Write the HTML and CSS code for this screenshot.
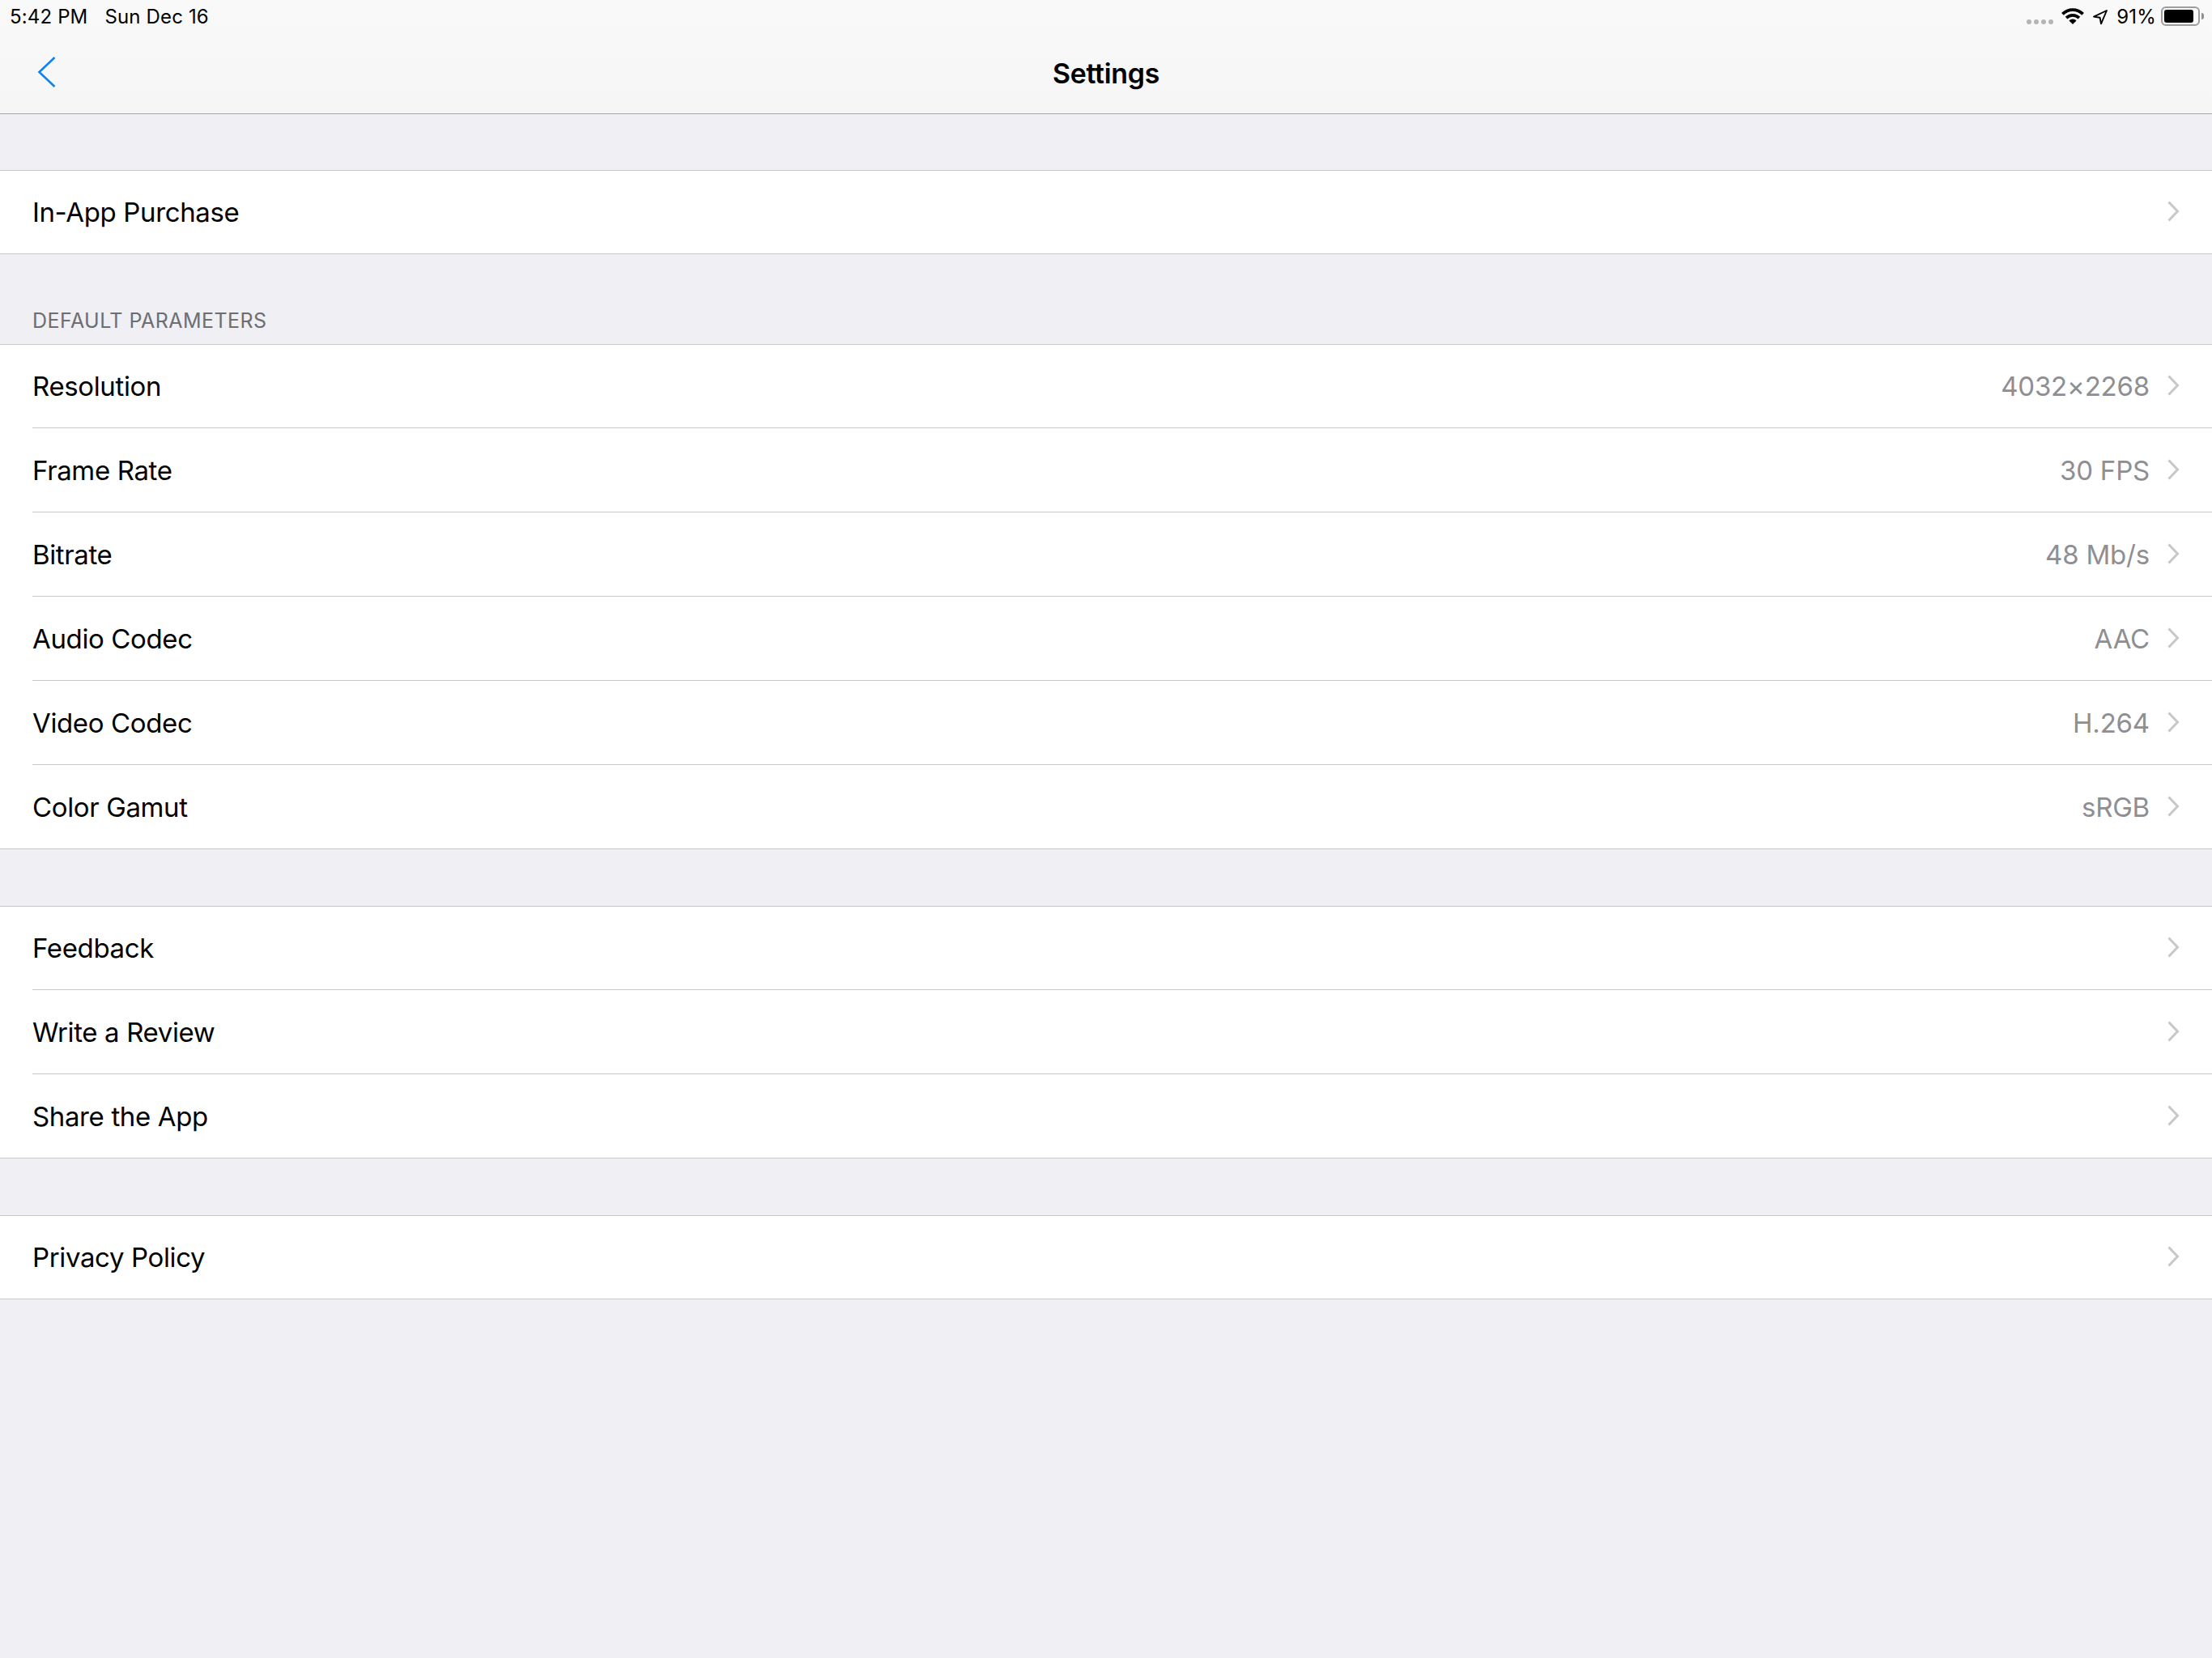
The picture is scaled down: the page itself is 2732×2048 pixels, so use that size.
FILE: index.html
```html
<!DOCTYPE html>
<html lang="en">
<head>
<meta charset="utf-8">
<title>Settings</title>
<link rel="stylesheet" href="styles.css">
</head>
<body>
<header class="top">
  <div class="status">
    <div class="status-left"><span class="time">5:42 PM</span><span class="date">Sun Dec 16</span></div>
    <div class="status-right">
      <div class="dots"><i></i><i></i><i></i><i></i></div>
      <svg class="wifi" width="28" height="20" viewBox="0 0 28 20"><path d="M14 20 9.4 15.4a6.5 6.5 0 0 1 9.2 0Z" fill="#000"/><path d="M6.1 12.1a11.2 11.2 0 0 1 15.8 0" fill="none" stroke="#000" stroke-width="3.8"/><path d="M1.4 7.4a17.8 17.8 0 0 1 25.2 0" fill="none" stroke="#000" stroke-width="3.8"/></svg>
      <svg class="loc" width="20" height="20" viewBox="0 0 20 20"><path d="M18 2 2 9.6l7.6 1.2L11 18.4Z" fill="none" stroke="#000" stroke-width="1.9" stroke-linejoin="round"/></svg>
      <span class="pct">91%</span>
      <div class="battery"><div class="battery-body"><div class="battery-fill"></div></div><div class="battery-cap"></div></div>
    </div>
  </div>
  <nav class="nav">
    <svg class="back" width="24" height="40" viewBox="0 0 24 40"><path d="M21.5 2 2.5 20l19 18" fill="none" stroke="#0a84f0" stroke-width="2.6"/></svg>
    <h1 class="title">Settings</h1>
  </nav>
</header>
<main>
  <section class="group first">
    <div class="row"><span class="label">In-App Purchase</span><svg class="chev" width="18" height="28" viewBox="0 0 18 28"><path d="M4.5 2.5 15.5 14 4.5 25.5" fill="none" stroke="#c7c7cc" stroke-width="3"/></svg></div>
  </section>
  <h2 class="section-title">DEFAULT PARAMETERS</h2>
  <section class="group">
    <div class="row"><span class="label">Resolution</span><span class="value">4032×2268</span><svg class="chev" width="18" height="28" viewBox="0 0 18 28"><path d="M4.5 2.5 15.5 14 4.5 25.5" fill="none" stroke="#c7c7cc" stroke-width="3"/></svg></div>
    <div class="row"><span class="label">Frame Rate</span><span class="value">30 FPS</span><svg class="chev" width="18" height="28" viewBox="0 0 18 28"><path d="M4.5 2.5 15.5 14 4.5 25.5" fill="none" stroke="#c7c7cc" stroke-width="3"/></svg></div>
    <div class="row"><span class="label">Bitrate</span><span class="value">48 Mb/s</span><svg class="chev" width="18" height="28" viewBox="0 0 18 28"><path d="M4.5 2.5 15.5 14 4.5 25.5" fill="none" stroke="#c7c7cc" stroke-width="3"/></svg></div>
    <div class="row"><span class="label">Audio Codec</span><span class="value">AAC</span><svg class="chev" width="18" height="28" viewBox="0 0 18 28"><path d="M4.5 2.5 15.5 14 4.5 25.5" fill="none" stroke="#c7c7cc" stroke-width="3"/></svg></div>
    <div class="row"><span class="label">Video Codec</span><span class="value">H.264</span><svg class="chev" width="18" height="28" viewBox="0 0 18 28"><path d="M4.5 2.5 15.5 14 4.5 25.5" fill="none" stroke="#c7c7cc" stroke-width="3"/></svg></div>
    <div class="row"><span class="label">Color Gamut</span><span class="value">sRGB</span><svg class="chev" width="18" height="28" viewBox="0 0 18 28"><path d="M4.5 2.5 15.5 14 4.5 25.5" fill="none" stroke="#c7c7cc" stroke-width="3"/></svg></div>
  </section>
  <section class="group gap">
    <div class="row"><span class="label">Feedback</span><svg class="chev" width="18" height="28" viewBox="0 0 18 28"><path d="M4.5 2.5 15.5 14 4.5 25.5" fill="none" stroke="#c7c7cc" stroke-width="3"/></svg></div>
    <div class="row"><span class="label">Write a Review</span><svg class="chev" width="18" height="28" viewBox="0 0 18 28"><path d="M4.5 2.5 15.5 14 4.5 25.5" fill="none" stroke="#c7c7cc" stroke-width="3"/></svg></div>
    <div class="row"><span class="label">Share the App</span><svg class="chev" width="18" height="28" viewBox="0 0 18 28"><path d="M4.5 2.5 15.5 14 4.5 25.5" fill="none" stroke="#c7c7cc" stroke-width="3"/></svg></div>
  </section>
  <section class="group gap">
    <div class="row"><span class="label">Privacy Policy</span><svg class="chev" width="18" height="28" viewBox="0 0 18 28"><path d="M4.5 2.5 15.5 14 4.5 25.5" fill="none" stroke="#c7c7cc" stroke-width="3"/></svg></div>
  </section>
</main>
</body>
</html>
```
FILE: styles.css
```css
* { box-sizing: border-box; margin: 0; padding: 0; }
html, body { height: 100%; }
body {
  width: 2732px;
  height: 2048px;
  overflow: hidden;
  background: #efeff4;
  font-family: Inter, "Liberation Sans", sans-serif;
  color: #000;
}
.top {
  height: 141px;
  background: linear-gradient(#f9f9fa, #f6f6f7);
  border-bottom: 1px solid #a8a8aa;
}
.status {
  height: 40px;
  display: flex;
  justify-content: space-between;
  align-items: center;
  padding: 0 10px 0 12px;
  font-size: 24px;
  letter-spacing: 0.15px;
}
.status-left { display: flex; gap: 21px; }
.status-right { display: flex; align-items: center; }
.dots { display: flex; gap: 3px; margin-right: 10px; margin-top: 14px; }
.dots i { width: 6px; height: 6px; border-radius: 50%; background: #b4b4b6; }
.wifi { margin-right: 10px; }
.loc { margin-right: 10px; margin-top: 2px; }
.pct { margin-right: 6px; }
.battery { display: flex; align-items: center; }
.battery-body {
  width: 48px;
  height: 24px;
  border: 2px solid #9d9d9f;
  border-radius: 6px;
  padding: 2px;
}
.battery-fill { height: 100%; width: 91%; background: #000; border-radius: 3px; }
.battery-cap { width: 3px; height: 8px; margin-left: 2px; background: #8f8f91; border-radius: 0 3px 3px 0; }
.nav {
  height: 100px;
  display: flex;
  align-items: center;
  justify-content: center;
  position: relative;
}
.back { position: absolute; left: 46px; top: 29px; }
.title { font-size: 34px; font-weight: 600; letter-spacing: -0.35px; }
.group { background: #fff; border-top: 1px solid #c8c7cc; }
.first { margin-top: 69px; }
.gap { margin-top: 70px; }
.section-title {
  height: 111px;
  padding: 0 40px 14px;
  display: flex;
  align-items: flex-end;
  font-size: 25px;
  font-weight: 400;
  color: #6d6d72;
  letter-spacing: 0.45px;
}
.row {
  height: 104px;
  display: flex;
  align-items: center;
  padding: 0 40px;
  position: relative;
}
.row:first-child { height: 103px; padding-bottom: 2px; }
.row::after {
  content: "";
  position: absolute;
  left: 40px;
  right: 0;
  bottom: 0;
  height: 1px;
  background: #c8c7cc;
}
.row:last-child::after { left: 0; }
.label { font-size: 33px; letter-spacing: -0.37px; flex: 1; }
.value { font-size: 33px; letter-spacing: -0.2px; color: #8e8e93; margin-right: 19px; }
.chev { flex: none; margin-bottom: 2px; }
```
